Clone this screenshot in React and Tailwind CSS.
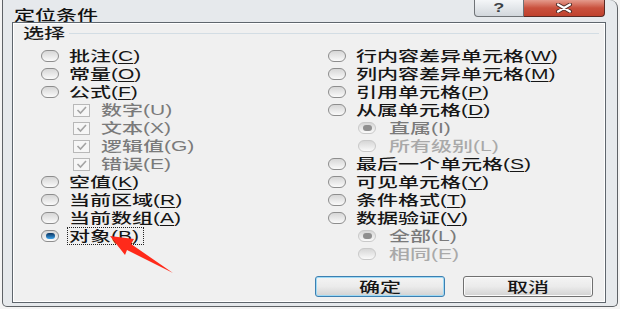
import React from 'react';

const left = [
  { t: '批注', m: 'C' },
  { t: '常量', m: 'O' },
  { t: '公式', m: 'F' },
  { t: '数字', m: 'U', cb: true },
  { t: '文本', m: 'X', cb: true },
  { t: '逻辑值', m: 'G', cb: true },
  { t: '错误', m: 'E', cb: true },
  { t: '空值', m: 'K' },
  { t: '当前区域', m: 'R' },
  { t: '当前数组', m: 'A' },
  { t: '对象', m: 'B', checked: true, focus: true },
];

const right = [
  { t: '行内容差异单元格', m: 'W' },
  { t: '列内容差异单元格', m: 'M' },
  { t: '引用单元格', m: 'P' },
  { t: '从属单元格', m: 'D' },
  { t: '直属', m: 'I', sub: true, checked: true, dim: true },
  { t: '所有级别', m: 'L', sub: true, light: true },
  { t: '最后一个单元格', m: 'S' },
  { t: '可见单元格', m: 'Y' },
  { t: '条件格式', m: 'T' },
  { t: '数据验证', m: 'V' },
  { t: '全部', m: 'L', sub: true, checked: true, dim: true },
  { t: '相同', m: 'E', sub: true, light: true },
];

function Label({ t, m, dim, light }) {
  const color = light ? 'text-[#a9a9a9]' : dim ? 'text-[#7a7a7a]' : 'text-[#161616]';
  return (
    <span className={`inline-block origin-left scale-x-150 whitespace-nowrap text-[14px] font-medium leading-[14px] ${color}`}>
      {t}(<span className={dim || light ? '' : 'underline underline-offset-2'}>{m}</span>)
    </span>
  );
}

function Radio({ checked, disabled }) {
  return (
    <span className={`flex h-[12px] w-[18px] shrink-0 items-center justify-center rounded-full border bg-linear-to-b from-[#d6d6d6] to-[#fafafa] ${disabled ? 'border-[#c9c9c9]' : 'border-[#8d8d8d]'}`}>
      {checked && (
        <span className={`h-[6px] w-[9px] rounded-full ${disabled ? 'bg-[#8f8f8f]' : 'bg-linear-to-b from-[#0b3561] to-[#3ea3ea]'}`} />
      )}
    </span>
  );
}

function Check() {
  return (
    <span className="flex h-[13px] w-[17px] shrink-0 items-center justify-center border border-[#b8b8b8] bg-[#f6f6f6]">
      <svg width="13" height="10" viewBox="0 0 13 10">
        <path d="M2.5 5 L5.5 8 L11 2" stroke="#a3a3a3" strokeWidth="1.6" fill="none" />
      </svg>
    </span>
  );
}

function Row({ item }) {
  if (item.cb) {
    return (
      <div className="flex h-[18px] items-center pl-[32px]">
        <Check />
        <span className="ml-[11px]"><Label {...item} dim /></span>
      </div>
    );
  }
  if (item.sub) {
    return (
      <div className="flex h-[18px] items-center pl-[30px]">
        <Radio checked={item.checked} disabled />
        <span className="ml-[13px]"><Label {...item} /></span>
      </div>
    );
  }
  if (item.focus) {
    return (
      <div className="flex h-[18px] items-center">
        <Radio checked />
        <span className="ml-[8px] flex h-[18px] w-[77px] items-center border border-dotted border-[#222] pl-[1px]">
          <Label {...item} />
        </span>
      </div>
    );
  }
  return (
    <div className="flex h-[18px] items-center">
      <Radio checked={item.checked} />
      <span className="ml-[10px]"><Label {...item} /></span>
    </div>
  );
}

export default function App() {
  return (
    <div className="relative h-[309px] w-[620px] overflow-hidden bg-[#f4f4f4] font-['Liberation_Sans','Noto_Sans_CJK_SC',sans-serif]">
      <div className="mx-[2px] flex h-[307px] flex-col rounded-b-[5px] rounded-tr-[8px] border-x border-b border-[#5e6266] bg-[#e6e9ec]">
        <div className="flex h-[22px] shrink-0">
          <span className="ml-[11px] mt-[3px]">
            <span className="inline-block origin-left scale-x-150 text-[14px] font-medium leading-[14px] text-[#111]">定位条件</span>
          </span>
          <div className="ml-auto mr-[12px] flex h-[17px]">
            <div className="flex w-[50px] items-center justify-center rounded-bl-[4px] border border-t-0 border-[#6f7377] bg-linear-to-b from-[#f4f6f8] to-[#d2d7dc]">
              <span className="inline-block scale-x-150 text-[12px] font-bold leading-[12px] text-[#3b3f44]">?</span>
            </div>
            <div className="flex w-[81px] items-center justify-center rounded-br-[4px] border border-l-0 border-t-0 border-[#5a2a24] bg-linear-to-b from-[#e49a8c] via-[#c9503d] to-[#c0412d]">
              <svg width="20" height="10" viewBox="0 0 20 10">
                <path d="M4 1.5 L16 8.5 M16 1.5 L4 8.5" stroke="#4a2a26" strokeWidth="4" strokeLinecap="round" />
                <path d="M4 1.5 L16 8.5 M16 1.5 L4 8.5" stroke="#ffffff" strokeWidth="2.2" strokeLinecap="round" />
              </svg>
            </div>
          </div>
        </div>

        <div className="ml-[9px] mr-[11px] flex h-[281px] flex-col border border-[#5f666d] bg-[#f0f0f0] shadow-[inset_0_0_0_1px_#ffffff]">
          <div className="mt-[2px] flex h-[16px] items-center pl-[10px] pr-[6px]">
            <span className="w-[46px] shrink-0">
              <span className="inline-block origin-left scale-x-150 text-[14px] font-medium leading-[14px] text-[#1a1a1a]">选择</span>
            </span>
            <div className="h-px flex-1 bg-[#d3dde4]" />
          </div>

          <div className="mt-[6px] flex pl-[28px]">
            <div className="w-[287px]">
              {left.map((it, i) => <Row key={i} item={it} />)}
            </div>
            <div className="flex-1">
              {right.map((it, i) => <Row key={i} item={it} />)}
            </div>
          </div>

          <div className="mt-[13px] flex justify-end gap-[18px] pr-[12px]">
            <div className="flex h-[21px] w-[130px] items-center justify-center rounded-[3px] border border-[#3c7fb1] bg-linear-to-b from-[#f4f4f4] via-[#ebebeb] to-[#d2d2d2] shadow-[inset_0_0_0_1px_#9fdaf5]">
              <span className="inline-block scale-x-150 text-[14px] font-medium leading-[14px] text-[#161616]">确定</span>
            </div>
            <div className="flex h-[21px] w-[130px] items-center justify-center rounded-[3px] border border-[#707070] bg-linear-to-b from-[#f4f4f4] via-[#ebebeb] to-[#d2d2d2] shadow-[inset_0_0_0_1px_#fbfbfb]">
              <span className="inline-block scale-x-150 text-[14px] font-medium leading-[14px] text-[#161616]">取消</span>
            </div>
          </div>
        </div>
      </div>

      <svg className="pointer-events-none absolute inset-0" width="620" height="309" viewBox="0 0 620 309">
        <polygon points="110,236 134,239 131,244 173,273 127,250 125,255" fill="#ff2a1a" />
      </svg>
    </div>
  );
}
